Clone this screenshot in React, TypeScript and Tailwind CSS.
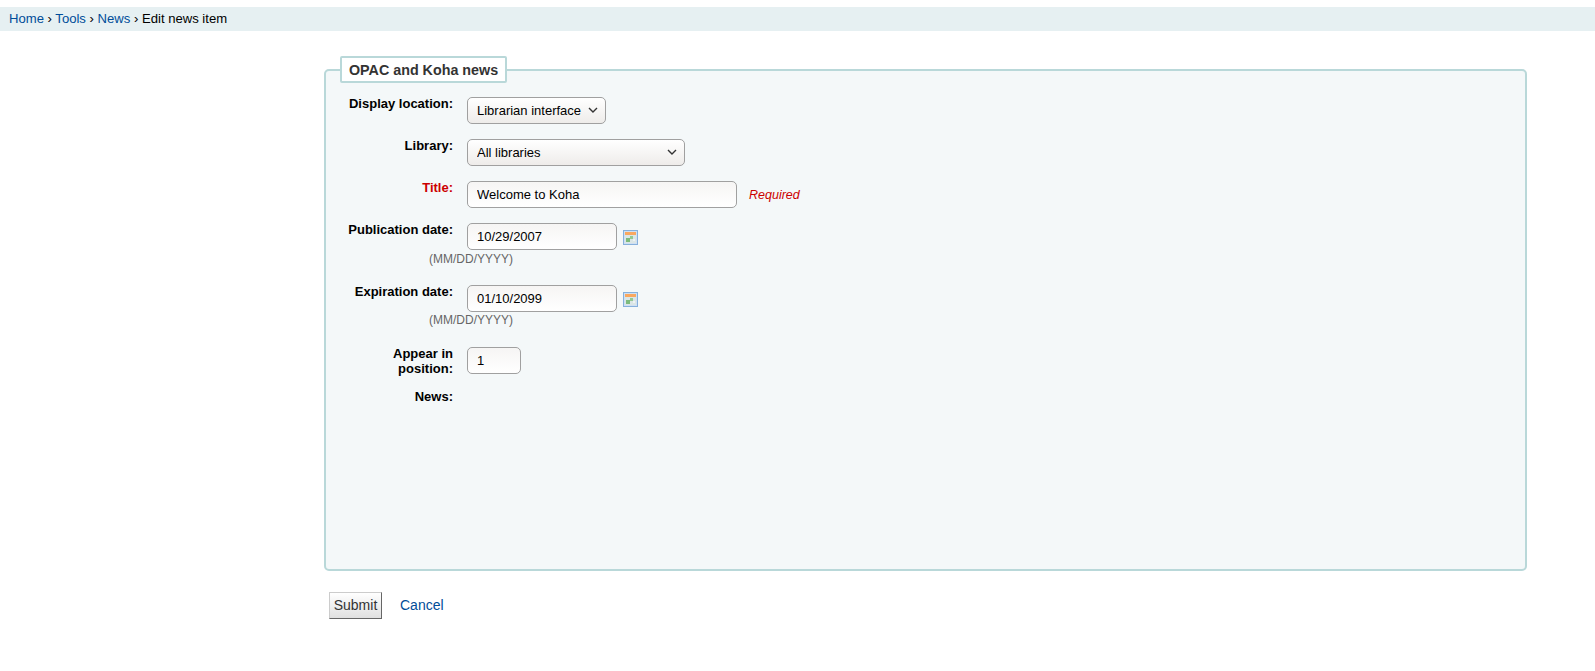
import React from 'react';

const CalendarIcon = () => (
  <svg width="15" height="15" viewBox="0 0 15 15" className="ml-[6px] mt-[7px] shrink-0">
    <rect x="0.5" y="0.5" width="14" height="14" fill="#cfe0f3" stroke="#86b0dc" />
    <rect x="2" y="2" width="11" height="3" fill="#f9a860" />
    <rect x="2" y="5" width="11" height="8" fill="#dbe6e6" />
    <rect x="3" y="8" width="4" height="4" fill="#7dbb7d" />
    <rect x="7" y="6" width="3" height="3" fill="#93c993" />
    <rect x="10" y="9" width="2" height="2" fill="#eef3f3" />
  </svg>
);

const fieldClass =
  'h-[27px] rounded-[5px] border border-[#a0a0a0] bg-gradient-to-b from-[#f6f5f4] to-white pl-[9px] text-[13px] text-black outline-none';

const Label: React.FC<{ children: React.ReactNode; red?: boolean }> = ({ children, red }) => (
  <label
    className={`w-[113px] mr-[14px] -mt-[1px] shrink-0 text-right text-[13px] leading-[15px] font-bold ${
      red ? 'text-[#cc0000]' : 'text-black'
    }`}
  >
    {children}
  </label>
);

const Select: React.FC<{ value: string; className: string }> = ({ value, className }) => (
  <div className={`relative ${className}`}>
    <select className="h-[27px] w-full appearance-none rounded-[5px] border border-[#a0a0a0] bg-gradient-to-b from-white to-[#eeecea] pl-[9px] text-[13px] text-black outline-none">
      <option>{value}</option>
    </select>
    <svg width="10" height="6" viewBox="0 0 10 6" fill="none" className="pointer-events-none absolute right-[8px] top-[10px]">
      <path d="M1 1l4 4 4-4" stroke="#333333" strokeWidth="1.4" />
    </svg>
  </div>
);

const DateRow: React.FC<{ label: string; value: string; className: string; hintClass: string }> = ({
  label,
  value,
  className,
  hintClass,
}) => (
  <div className={className}>
    <div className="flex">
      <Label>{label}</Label>
      <input defaultValue={value} className={`${fieldClass} w-[150px]`} />
      <CalendarIcon />
    </div>
    <div className={`ml-[89px] text-[12px] leading-[14px] text-[#666666] ${hintClass}`}>(MM/DD/YYYY)</div>
  </div>
);

export default function App() {
  return (
    <div className="min-h-screen bg-white pt-[7px] font-['Liberation_Sans',Arial,sans-serif]">
      {/* Breadcrumbs */}
      <div className="h-[24px] bg-[#e6f0f2] pl-[9px] text-[13.1px] leading-[23px] text-black">
        <a href="#" className="text-[#004d99]">Home</a> ›{' '}
        <a href="#" className="text-[#004d99]">Tools</a> ›{' '}
        <a href="#" className="text-[#004d99]">News</a> › <span>Edit news item</span>
      </div>

      <form className="ml-[324px] mt-[25px] w-[1203px]">
        <fieldset className="h-[515px] rounded-[5px] border-2 border-[#b9d8d9] bg-[#f4f8f9] pl-[14px] pt-[14px]">
          <legend className="rounded-[2px] border-2 border-[#b9d8d9] bg-white px-[7px] pt-[2px] text-[14.3px] leading-[21px] font-bold text-[#333333]">
            OPAC and Koha news
          </legend>

          <div className="flex">
            <Label>Display location:</Label>
            <Select value="Librarian interface" className="w-[139px]" />
          </div>

          <div className="mt-[15px] flex">
            <Label>Library:</Label>
            <Select value="All libraries" className="w-[218px]" />
          </div>

          <div className="mt-[15px] flex">
            <Label red>Title:</Label>
            <input defaultValue="Welcome to Koha" className={`${fieldClass} w-[270px]`} />
            <span className="ml-[12px] mt-[7px] text-[12.5px] leading-[15px] text-[#cc0000] italic">Required</span>
          </div>

          <DateRow label="Publication date:" value="10/29/2007" className="mt-[15px]" hintClass="mt-[2px]" />
          <DateRow label="Expiration date:" value="01/10/2099" className="mt-[19px]" hintClass="mt-[1px]" />

          <div className="mt-[20px] flex">
            <Label>Appear in position:</Label>
            <input defaultValue="1" className={`${fieldClass} w-[54px]`} />
          </div>

          <div className="mt-[14px] flex">
            <Label>News:</Label>
          </div>
        </fieldset>

        <div className="mt-[21px] flex items-center pl-[5px]">
          <button
            type="button"
            className="h-[27px] w-[53px] border border-[#cccccc] border-r-[#666666] border-b-[#666666] bg-gradient-to-b from-white to-[#e0e0e0] text-[14px] text-[#333333]"
          >
            Submit
          </button>
          <a href="#" className="ml-[18px] text-[14px] text-[#004d99]">Cancel</a>
        </div>
      </form>
    </div>
  );
}
